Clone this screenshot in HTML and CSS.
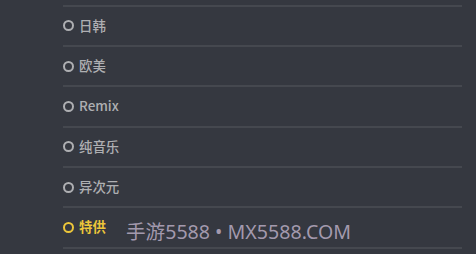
FILE: index.html
```html
<!DOCTYPE html>
<html lang="zh">
<head>
<meta charset="utf-8">
<link rel="stylesheet" href="styles.css">
</head>
<body>
<div class="page">
  <ul class="list">
    <li class="item"><span class="dot"></span><span class="label">日韩</span></li>
    <li class="item"><span class="dot"></span><span class="label">欧美</span></li>
    <li class="item"><span class="dot"></span><span class="label">Remix</span></li>
    <li class="item"><span class="dot"></span><span class="label">纯音乐</span></li>
    <li class="item"><span class="dot"></span><span class="label">异次元</span></li>
    <li class="item active"><span class="dot"></span><span class="label">特供</span></li>
  </ul>
  <div class="watermark">手游5588 • MX5588.COM</div>
</div>
</body>
</html>
```
FILE: styles.css
```css
html, body {
  margin: 0;
  padding: 0;
  background: #353840;
  width: 476px;
  height: 254px;
  overflow: hidden;
}
.page {
  position: relative;
  width: 476px;
  height: 254px;
}
.list {
  list-style: none;
  margin: 0;
  padding: 4.7px 0 0 63px;
  width: 399px;
}
.item {
  display: flex;
  align-items: center;
  gap: 5px;
  height: 38.33px;
  border-top: 2px solid #45484f;
  font-family: "Noto Sans CJK SC", "Noto Sans", sans-serif;
  font-size: 13.4px;
  font-weight: 500;
  line-height: 1;
  color: #aeafb2;
}
.label {
  padding-bottom: 1px;
}
.item:last-child {
  border-bottom: 2px solid #45484f;
}
.dot {
  box-sizing: border-box;
  width: 11px;
  height: 11px;
  border: 2px solid #aeafb2;
  border-radius: 50%;
  flex: none;
}
.item.active {
  color: #ecc63a;
  font-weight: bold;
}
.item.active .dot {
  border-color: #ecc63a;
}
.watermark {
  position: absolute;
  left: 126px;
  top: 218px;
  font-family: "Noto Sans", "Noto Sans CJK SC", sans-serif;
  font-size: 19.6px;
  line-height: 28px;
  color: rgba(184, 172, 194, 0.85);
  white-space: nowrap;
}
```
